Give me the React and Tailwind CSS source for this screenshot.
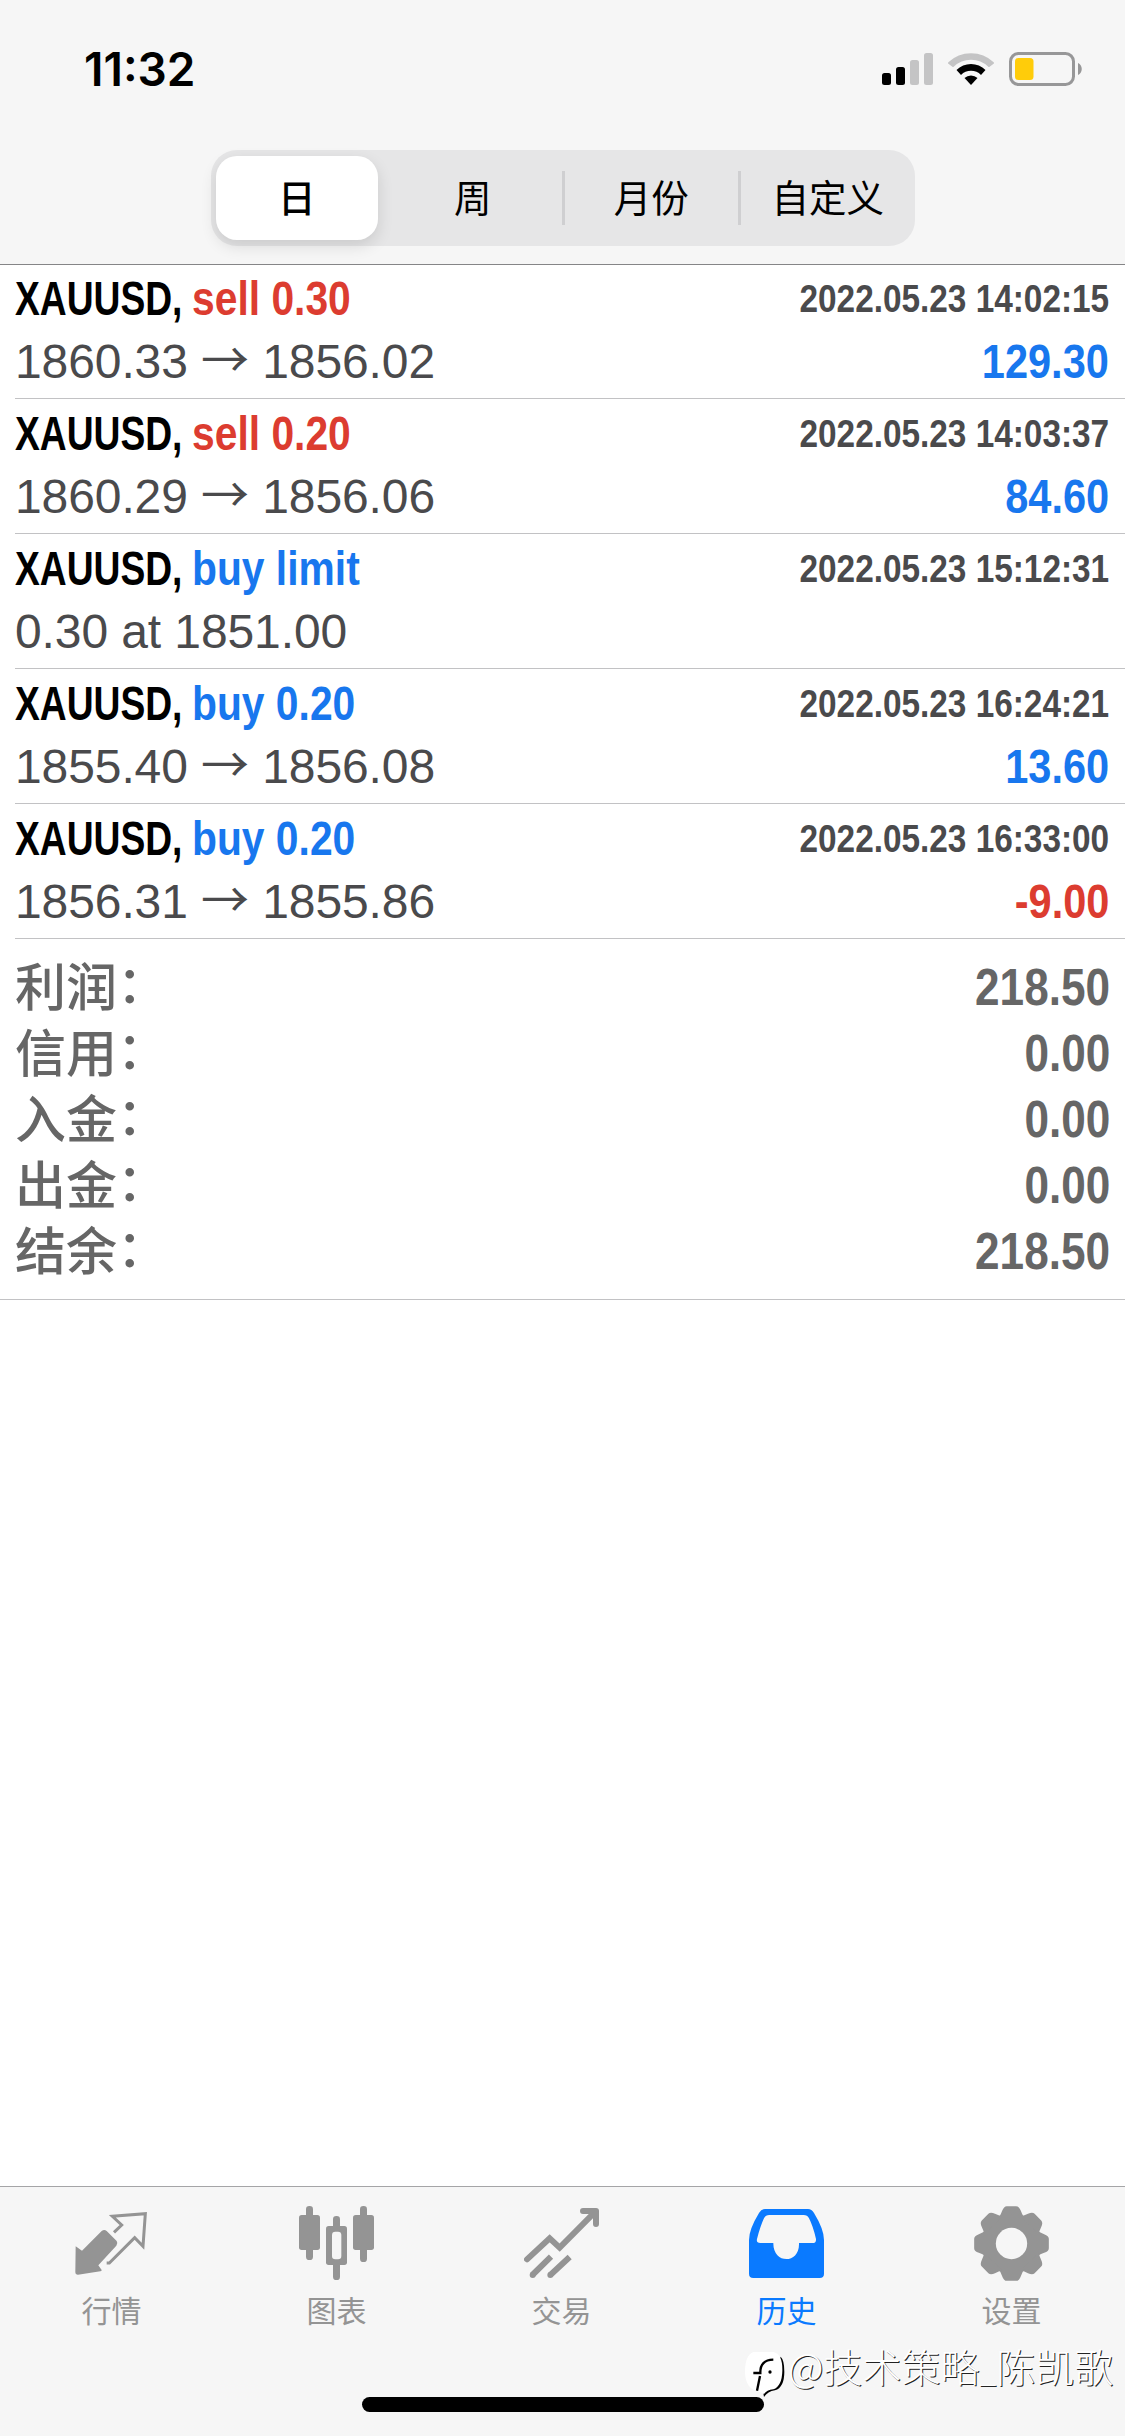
const segments = ["日", "周", "月份", "自定义"];

const deals = [
  { side: "sell 0.30", sell: true, time: "2022.05.23 14:02:15", open: "1860.33", close: "1856.02", profit: "129.30" },
  { side: "sell 0.20", sell: true, time: "2022.05.23 14:03:37", open: "1860.29", close: "1856.06", profit: "84.60" },
  { side: "buy limit", time: "2022.05.23 15:12:31", note: "0.30 at 1851.00" },
  { side: "buy 0.20", time: "2022.05.23 16:24:21", open: "1855.40", close: "1856.08", profit: "13.60" },
  { side: "buy 0.20", time: "2022.05.23 16:33:00", open: "1856.31", close: "1855.86", profit: "-9.00", loss: true },
];

const totals = [
  ["利润", "218.50"],
  ["信用", "0.00"],
  ["入金", "0.00"],
  ["出金", "0.00"],
  ["结余", "218.50"],
];

function StatusIcons() {
  return (
    <svg className="w-[201px] h-[36px]" viewBox="882 51 201 36" fill="none">
      <rect x="882" y="73" width="9" height="12" rx="2.5" fill="#000" />
      <rect x="896" y="67" width="9" height="18" rx="2.5" fill="#000" />
      <rect x="910" y="60" width="9" height="25" rx="2.5" fill="#c4c4c5" />
      <rect x="924" y="53" width="9" height="32" rx="2.5" fill="#c4c4c5" />
      <path d="M949 63 A32 32 0 0 1 993 63 L989 66 A26 26 0 0 0 953 66 Z" fill="#c4c4c5" stroke="#c4c4c5" strokeWidth="2" strokeLinejoin="round" />
      <path d="M956.5 70 A20.5 20.5 0 0 1 985.5 70 L981 75 A14 14 0 0 0 961 75 Z" fill="#000" />
      <path d="M964.5 78 A9.5 9.5 0 0 1 977.5 78 L971 85 Z" fill="#000" />
      <rect x="1010.5" y="53.5" width="63" height="31" rx="8" stroke="#979798" strokeWidth="3" />
      <rect x="1015" y="58" width="18.5" height="22" rx="3.5" fill="#ffcc0a" />
      <path d="M1078 63 C1083 65 1083 73 1078 75 Z" fill="#979798" />
    </svg>
  );
}

function QuotesIcon() {
  return (
    <svg className="size-[75px]" viewBox="222 108 225 225" fill="none" stroke="currentColor">
      <path d="M227 229 L246 242 L305 183 Q313 177 320 183 L350 213 Q355 220 349 227 L295 286 L305 300 Q305 304 301 304 L234 314 Q226 314 226 306 Z" fill="currentColor" stroke="none" />
      <path d="M342 187 L365 165 L337 139 L436 131 L429 229 L404 203 L328 279 H320" strokeWidth="9" />
    </svg>
  );
}

function ChartIcon() {
  return (
    <svg className="size-[75px]" viewBox="897 108 225 225" fill="currentColor">
      <rect x="918" y="108" width="21" height="162" rx="10" />
      <rect x="897" y="135" width="63" height="105" rx="8" />
      <rect x="1080" y="108" width="21" height="168" rx="10" />
      <rect x="1059" y="135" width="63" height="105" rx="8" />
      <rect x="999" y="138" width="21" height="192" rx="10" />
      <rect x="978" y="168" width="63" height="117" rx="8" />
      <rect x="996" y="185" width="28" height="83" rx="10" fill="#f6f6f6" />
    </svg>
  );
}

function TradeIcon() {
  return (
    <svg className="size-[75px]" viewBox="222 108 225 225" fill="none" stroke="currentColor" strokeWidth="18">
      <path d="M231 268 L299 205 L329 233 L436 125" strokeLinecap="round" />
      <path d="M399 123 H438 V162" strokeLinecap="round" strokeLinejoin="round" />
      <path d="M247 315 L303 260 M301 315 L359 261" />
      <circle cx="248" cy="315" r="9" fill="currentColor" stroke="none" />
      <circle cx="301" cy="315" r="9" fill="currentColor" stroke="none" />
    </svg>
  );
}

function HistoryIcon() {
  return (
    <svg className="size-[75px]" viewBox="897 108 225 225">
      <path
        d="M945 117 H1074 Q1085 117 1092 129 Q1122 178 1122 210 V311 Q1122 324 1109 324 H910 Q897 324 897 311 V210 Q897 178 927 129 Q934 117 945 117 Z"
        fill="currentColor"
      />
      <path
        d="M958 135 H1061 Q1072 135 1077 145 Q1089 168 1098 207 Q1099 219 1088 219 H1047 C1050 283 969 283 970 219 H931 Q918 219 921 207 Q931 168 942 145 Q947 135 958 135 Z"
        fill="#f6f6f6"
      />
    </svg>
  );
}

function SettingsIcon() {
  return (
    <svg className="size-[75px]" viewBox="-112.5 -112.5 225 225" fill="currentColor">
      <circle r="88" />
      {[0, 45, 90, 135, 180, 225, 270, 315].map((deg) => (
        <path
          key={deg}
          transform={`rotate(${deg})`}
          d="M-38 -78 Q-32 -86 -28 -98 Q-23 -112 -14 -112 H14 Q23 -112 28 -98 Q32 -86 38 -78 Z"
        />
      ))}
      <circle r="47" fill="#f6f6f6" />
    </svg>
  );
}

const tabs = [
  { label: "行情", Icon: QuotesIcon },
  { label: "图表", Icon: ChartIcon },
  { label: "交易", Icon: TradeIcon },
  { label: "历史", Icon: HistoryIcon, active: true },
  { label: "设置", Icon: SettingsIcon },
];

function Deal({ deal }) {
  return (
    <div className="h-[135px] ml-[15px] pr-4 pt-[4px] border-b border-[#c2c2c4]">
      <div className="flex h-[62px] leading-[62px] text-[48px] font-bold whitespace-nowrap">
        <div className="w-[177px]">
          <div className="origin-left scale-x-[0.775]">XAUUSD,</div>
        </div>
        <div className={`origin-left scale-x-[0.85] ${deal.sell ? "text-[#dc3c30]" : "text-[#1877ee]"}`}>
          {deal.side}
        </div>
        <div className="ml-auto text-[39px] text-[#4a4a4c] origin-right scale-x-[0.855]">{deal.time}</div>
      </div>
      <div className="flex justify-between h-[64px] leading-[64px] text-[48px]">
        <div className="text-[#4a4a4c] tracking-[-0.1px]">
          {deal.note ? (
            deal.note
          ) : (
            <>
              {deal.open} <span className="font-['Noto_Sans_CJK_SC'] leading-none align-[1px]">→</span> {deal.close}
            </>
          )}
        </div>
        <div className={`font-bold origin-right scale-x-[0.865] ${deal.loss ? "text-[#dc3c30]" : "text-[#1877ee]"}`}>
          {deal.profit}
        </div>
      </div>
    </div>
  );
}

export default function App() {
  return (
    <div className="relative flex flex-col w-[1125px] h-[2436px] overflow-hidden bg-white text-black font-['Liberation_Sans','Noto_Sans_CJK_SC',sans-serif]">
      <header className="h-[265px] shrink-0 bg-[#f6f6f6] border-b border-[#858587]">
        <div className="flex justify-between h-[150px] pl-[84px] pr-[42px] pt-[51px]">
          <div className="text-[46px] leading-[36px] font-semibold font-['Inter']">11:32</div>
          <StatusIcons />
        </div>
        <div className="flex items-center w-[704px] h-[96px] mx-auto pl-[5px] rounded-[26px] bg-[#e6e6e7] text-[37.5px] font-['Noto_Sans_CJK_SC']">
          {segments.map((name, i) => (
            <div
              key={name}
              className={
                i === 0
                  ? "flex items-center justify-center w-[163px] mr-[6px] h-[84px] pb-[3px] rounded-[21px] bg-white font-medium shadow-[0_6px_16px_rgba(0,0,0,0.12)]"
                  : i === 1
                    ? "flex items-center justify-center w-[178px] h-[54px] pb-[3px]"
                    : "flex items-center justify-center w-[177px] h-[54px] pb-[3px] border-l-3 border-[#cfcfd1]"
              }
            >
              {name}
            </div>
          ))}
        </div>
      </header>

      <main className="flex-1 min-h-0">
        <div className="-mt-px">
          {deals.map((deal) => (
            <Deal key={deal.time} deal={deal} />
          ))}
        </div>
        <div className="h-[361px] pt-[15px] px-[15px] border-b border-[#c2c2c4] text-[#666]">
          {totals.map(([label, value]) => (
            <div key={label} className="flex justify-between h-[66px] text-[51px] leading-[68px]">
              <span className="flex leading-[60px] font-medium font-['Noto_Sans_CJK_SC']">
                {label}
                <span className="font-['Noto_Sans_CJK_TC'] [font-feature-settings:'halt']" lang="zh-TW">：</span>
              </span>
              <span className="font-bold origin-right scale-x-[0.865]">{value}</span>
            </div>
          ))}
        </div>
      </main>

      <footer className="h-[250px] shrink-0 bg-[#f6f6f6] border-t border-[#a5a5a7]">
        <nav className="flex h-[210px] pt-[19px]">
          {tabs.map(({ label, Icon, active }) => (
            <div
              key={label}
              className={`flex flex-col items-center w-[225px] pr-[2px] ${active ? "text-[#0a7aff]" : "text-[#949494]"}`}
            >
              <Icon />
              <span className="mt-[10px] text-[30px] leading-[36px] font-['Noto_Sans_CJK_SC']">{label}</span>
            </div>
          ))}
        </nav>
        <div className="w-[402px] h-[15px] mx-auto rounded-full bg-black" />
      </footer>

      <div className="absolute left-[740px] top-[2340px] flex items-start">
        <svg className="w-[45px] h-[50px] mt-[10px]" viewBox="0 60 135 150" fill="none">
          <path d="M122 80 Q133 90 133 125 Q133 172 105 181 Q83 184 72 201 L70 190 Z" fill="#000" />
          <path d="M40 66 H100 Q128 72 127 122 Q126 168 100 178 Q80 180 72 192 L55 184 Q18 178 15 130 Q14 76 40 66 Z" fill="#fff" />
          <path d="M40 129 H61 Q60 90 100 89 M60 138 L51 182" stroke="#000" strokeWidth="7" />
          <circle cx="90" cy="126" r="5" fill="#000" />
        </svg>
        <span className="ml-[3px] text-[39px] leading-[50px] font-light text-white whitespace-nowrap font-['Noto_Sans_CJK_SC'] [text-shadow:1px_1px_0_#222]">
          @技术策略<span className="text-[30px]">_</span>陈凯歌
        </span>
      </div>
    </div>
  );
}
